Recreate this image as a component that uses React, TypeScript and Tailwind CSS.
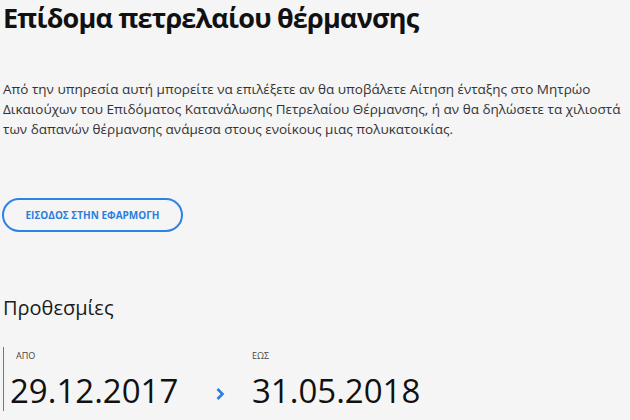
export default function App() {
  return (
    <div
      className="min-h-[420px] w-[630px] overflow-hidden bg-[#f5f5f5] pl-[3px] text-[#222]"
      style={{ fontFamily: '"Open Sans", "Noto Sans", sans-serif' }}
    >
      <h1 className="pt-[1px] text-[27px] font-bold leading-[34px] tracking-[-0.8px] text-[#111]">
        Επίδομα πετρελαίου θέρμανσης
      </h1>

      <p className="mt-[44px] w-[625px] text-[13.5px] leading-[20px] text-[#333]">
        Από την υπηρεσία αυτή μπορείτε να επιλέξετε αν θα υποβάλετε Αίτηση ένταξης στο Μητρώο
        Δικαιούχων του Επιδόματος Κατανάλωσης Πετρελαίου Θέρμανσης, ή αν θα δηλώσετε τα χιλιοστά
        των δαπανών θέρμανσης ανάμεσα στους ενοίκους μιας πολυκατοικίας.
      </p>

      <button className="-ml-[1px] mt-[59px] flex h-[34px] w-[181px] items-center justify-center rounded-full border-2 border-[#2c83e6] text-[10px] font-bold text-[#2c7de0]">
        ΕΙΣΟΔΟΣ ΣΤΗΝ ΕΦΑΡΜΟΓΗ
      </button>

      <h2 className="mt-[62px] text-[20px] leading-[28px] text-[#1a1a1a]">Προθεσμίες</h2>

      <div className="mt-[25px] flex border-l border-[#777] pl-[6px]">
        <div className="w-[192px]">
          <div className="pl-[6px] pt-[3px] text-[9px] leading-[12px] text-[#444]">ΑΠΟ</div>
          <div className="mt-[9px] text-[33px] leading-[40px] text-[#111]">29.12.2017</div>
        </div>
        <div className="flex w-[50px] items-end pb-[10px] pl-[13px]">
          <svg width="10" height="14" viewBox="0 0 10 14" fill="none">
            <path d="M2.5 2 L7.5 7 L2.5 12" stroke="#2c7de0" strokeWidth="2.6" />
          </svg>
        </div>
        <div>
          <div className="pt-[3px] text-[9px] leading-[12px] text-[#444]">ΕΩΣ</div>
          <div className="mt-[9px] text-[33px] leading-[40px] text-[#111]">31.05.2018</div>
        </div>
      </div>
    </div>
  );
}
